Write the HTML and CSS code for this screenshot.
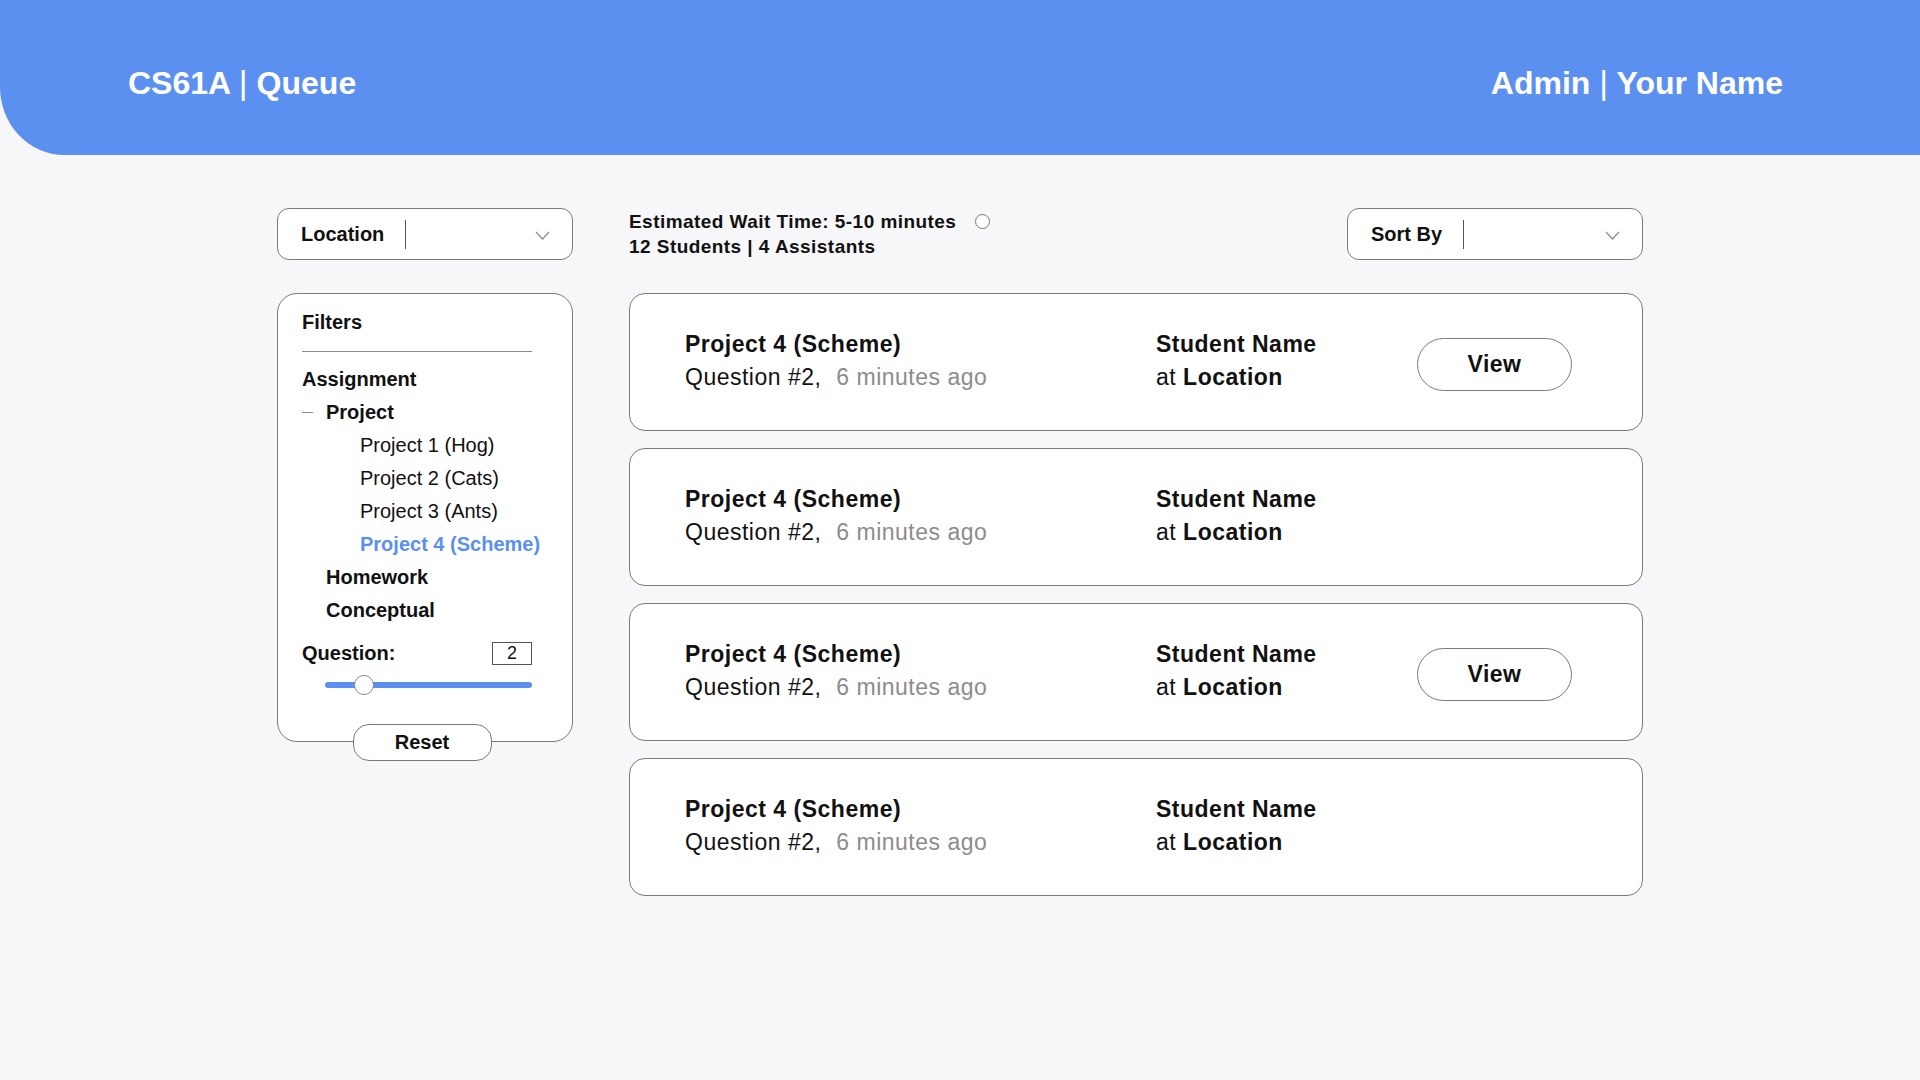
FILE: index.html
```html
<!DOCTYPE html>
<html lang="en">
<head>
<meta charset="utf-8">
<title>CS61A | Queue</title>
<link rel="stylesheet" href="styles.css">
</head>
<body>
<header class="topbar">
  <div class="brand">CS61A <span class="pipe">|</span> Queue</div>
  <div class="user">Admin <span class="pipe">|</span> Your Name</div>
</header>

<main class="page">
  <aside class="side">
    <div class="select">
      <span class="select-label">Location</span>
      <span class="select-div"></span>
      <svg class="chev" width="15" height="9" viewBox="0 0 15 9"><path d="M1 1 L7.5 8 L14 1" fill="none" stroke="#8a8a8a" stroke-width="1.2"/></svg>
    </div>

    <section class="filters">
      <div class="f-title">Filters</div>
      <div class="f-rule"></div>
      <div class="f-row bold">Assignment</div>
      <div class="f-row bold lvl1 has-dash"><span class="dash"></span>Project</div>
      <div class="f-row lvl2">Project 1 (Hog)</div>
      <div class="f-row lvl2">Project 2 (Cats)</div>
      <div class="f-row lvl2">Project 3 (Ants)</div>
      <div class="f-row lvl2 bold active">Project 4 (Scheme)</div>
      <div class="f-row bold lvl1">Homework</div>
      <div class="f-row bold lvl1">Conceptual</div>
      <div class="q-row">
        <span class="bold">Question:</span>
        <span class="q-box">2</span>
      </div>
      <div class="slider">
        <div class="track"></div>
        <div class="thumb" style="left: 29px"></div>
      </div>
    </section>
    <button class="reset">Reset</button>
  </aside>

  <section class="content">
    <div class="toolbar">
      <div class="wait">
        <div class="wait-line">Estimated Wait Time: 5-10 minutes <span class="dot"></span></div>
        <div class="wait-line">12 Students | 4 Assistants</div>
      </div>
      <div class="select">
        <span class="select-label">Sort By</span>
        <span class="select-div"></span>
        <svg class="chev" width="15" height="9" viewBox="0 0 15 9"><path d="M1 1 L7.5 8 L14 1" fill="none" stroke="#8a8a8a" stroke-width="1.2"/></svg>
      </div>
    </div>

    <div class="cards">
      <article class="card">
        <div class="c-main">
          <div class="bold">Project 4 (Scheme)</div>
          <div>Question #2, <span class="muted">6 minutes ago</span></div>
        </div>
        <div class="c-who">
          <div class="bold">Student Name</div>
          <div>at <span class="bold">Location</span></div>
        </div>
        <button class="view">View</button>
      </article>
      <article class="card">
        <div class="c-main">
          <div class="bold">Project 4 (Scheme)</div>
          <div>Question #2, <span class="muted">6 minutes ago</span></div>
        </div>
        <div class="c-who">
          <div class="bold">Student Name</div>
          <div>at <span class="bold">Location</span></div>
        </div>
        <div class="view-space"></div>
      </article>
      <article class="card">
        <div class="c-main">
          <div class="bold">Project 4 (Scheme)</div>
          <div>Question #2, <span class="muted">6 minutes ago</span></div>
        </div>
        <div class="c-who">
          <div class="bold">Student Name</div>
          <div>at <span class="bold">Location</span></div>
        </div>
        <button class="view">View</button>
      </article>
      <article class="card">
        <div class="c-main">
          <div class="bold">Project 4 (Scheme)</div>
          <div>Question #2, <span class="muted">6 minutes ago</span></div>
        </div>
        <div class="c-who">
          <div class="bold">Student Name</div>
          <div>at <span class="bold">Location</span></div>
        </div>
        <div class="view-space"></div>
      </article>
    </div>
  </section>
</main>
</body>
</html>
```
FILE: styles.css
```css
* { box-sizing: border-box; }
html, body { margin: 0; padding: 0; }
body {
  background: #f7f7f9;
  font-family: "Liberation Sans", Arial, Helvetica, sans-serif;
  color: #111;
  width: 1920px;
  min-height: 1080px;
}
.bold { font-weight: 700; }

.topbar {
  height: 155px;
  background: #5b90f0;
  border-bottom-left-radius: 64px 68px;
  display: flex;
  align-items: center;
  justify-content: space-between;
  padding: 10px 137px 0 128px;
  color: #fff;
  font-size: 32px;
  font-weight: 700;
  line-height: 36px;
}
.pipe { font-weight: 400; font-size: 34px; }

.page {
  width: 1366px;
  margin: 53px auto 0;
  display: grid;
  grid-template-columns: 296px 1fr;
  column-gap: 56px;
  align-items: start;
}

.select {
  width: 296px;
  height: 52px;
  border: 1px solid #7a7a7a;
  border-radius: 12px;
  background: #fff;
  display: flex;
  align-items: center;
  padding: 0 22px 0 23px;
  font-size: 20px;
  font-weight: 700;
}
.select-div {
  width: 1px;
  height: 29px;
  background: #555;
  margin-left: 21px;
}
.chev { margin-left: auto; margin-top: 2px; }

.side { display: flex; flex-direction: column; }

.filters {
  margin-top: 33px;
  border: 1px solid #7a7a7a;
  border-radius: 20px;
  background: #fff;
  padding: 12px 40px 46px 24px;
  font-size: 20px;
  line-height: 33px;
}
.f-title { font-weight: 700; }
.f-rule { height: 1px; background: #8a8a8a; margin: 12px 0 11px; }
.f-row { position: relative; white-space: nowrap; }
.lvl1 { padding-left: 24px; }
.lvl2 { padding-left: 58px; }
.has-dash .dash {
  position: absolute;
  left: 0;
  top: 16px;
  width: 11px;
  height: 1px;
  background: #888;
}
.active { color: #5b90f0; }

.q-row {
  margin-top: 10px;
  display: flex;
  justify-content: space-between;
  align-items: center;
}
.q-box {
  width: 40px;
  height: 23px;
  border: 1px solid #555;
  font-size: 18px;
  line-height: 21px;
  text-align: center;
}
.slider {
  position: relative;
  height: 20px;
  margin: 5px 0 0 23px;
}
.track {
  position: absolute;
  left: 0; right: 0; top: 7px;
  height: 6px;
  border-radius: 3px;
  background: #5b90f0;
}
.thumb {
  position: absolute;
  top: 0;
  width: 20px;
  height: 20px;
  border-radius: 50%;
  background: #fff;
  border: 1px solid #8a8a8a;
}

.reset {
  align-self: center;
  margin-top: -18px;
  width: 139px;
  height: 37px;
  border: 1px solid #7a7a7a;
  border-radius: 16px;
  background: #fff;
  font-family: inherit;
  font-size: 20px;
  font-weight: 700;
  color: #111;
  padding: 0;
  position: relative;
  left: -3px;
}

.toolbar {
  display: flex;
  justify-content: space-between;
  align-items: flex-start;
}
.wait {
  padding-top: 1px;
  font-size: 19px;
  letter-spacing: 0.45px;
  font-weight: 700;
  line-height: 25px;
}
.wait-line { display: flex; align-items: center; white-space: pre; }
.dot {
  display: inline-block;
  width: 15px;
  height: 15px;
  border: 1px solid #777;
  border-radius: 50%;
  margin-left: 13px;
  background: #fff;
}

.cards {
  margin-top: 33px;
  display: flex;
  flex-direction: column;
  gap: 17px;
}
.card {
  height: 138px;
  border: 1px solid #7a7a7a;
  border-radius: 16px;
  background: #fff;
  display: grid;
  grid-template-columns: 471px 1fr 155px;
  align-items: center;
  padding: 0 70px 2px 55px;
  font-size: 23px;
  letter-spacing: 0.5px;
  line-height: 33px;
  white-space: nowrap;
}
.muted { color: #8c8c8c; margin-left: 8px; }
.view {
  width: 155px;
  height: 53px;
  margin-top: 6px;
  border: 1px solid #7a7a7a;
  border-radius: 27px;
  background: #fff;
  font-family: inherit;
  font-size: 23px;
  letter-spacing: 0.5px;
  font-weight: 700;
  color: #111;
  padding: 0;
}
```
